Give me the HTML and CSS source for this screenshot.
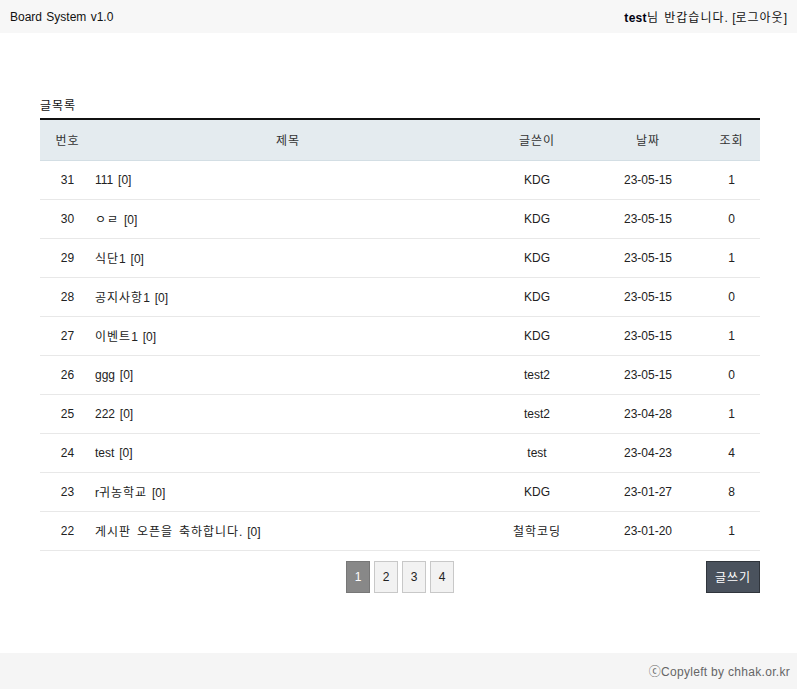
FILE: index.html
```html
<!DOCTYPE html>
<html lang="ko">
<head>
<meta charset="utf-8">
<title>Board System v1.0</title>
<link rel="stylesheet" href="styles.css">
</head>
<body>
<header class="top">
  <div class="brand">Board System v1.0</div>
  <div class="user"><b class="uid">test</b><span class="ko">님 반갑습니다</span>. [<a class="logout ko" href="#">로그아웃</a>]</div>
</header>
<main class="wrap">
  <h2 class="title ko">글목록</h2>
  <table class="board">
    <colgroup>
      <col class="c-no"><col class="c-subj"><col class="c-writer"><col class="c-date"><col class="c-hit">
    </colgroup>
    <thead>
      <tr class="ko"><th>번호</th><th>제목</th><th>글쓴이</th><th>날짜</th><th>조회</th></tr>
    </thead>
    <tbody>
      <tr><td>31</td><td class="subj">111 [0]</td><td>KDG</td><td>23-05-15</td><td>1</td></tr>
      <tr><td>30</td><td class="subj"><span class="ko">ㅇㄹ</span> [0]</td><td>KDG</td><td>23-05-15</td><td>0</td></tr>
      <tr><td>29</td><td class="subj"><span class="ko">식단</span>1 [0]</td><td>KDG</td><td>23-05-15</td><td>1</td></tr>
      <tr><td>28</td><td class="subj"><span class="ko">공지사항</span>1 [0]</td><td>KDG</td><td>23-05-15</td><td>0</td></tr>
      <tr><td>27</td><td class="subj"><span class="ko">이벤트</span>1 [0]</td><td>KDG</td><td>23-05-15</td><td>1</td></tr>
      <tr><td>26</td><td class="subj">ggg [0]</td><td>test2</td><td>23-05-15</td><td>0</td></tr>
      <tr><td>25</td><td class="subj">222 [0]</td><td>test2</td><td>23-04-28</td><td>1</td></tr>
      <tr><td>24</td><td class="subj">test [0]</td><td>test</td><td>23-04-23</td><td>4</td></tr>
      <tr><td>23</td><td class="subj">r<span class="ko">귀농학교</span> [0]</td><td>KDG</td><td>23-01-27</td><td>8</td></tr>
      <tr><td>22</td><td class="subj"><span class="ko">게시판 오픈을 축하합니다</span>. [0]</td><td class="ko">철학코딩</td><td>23-01-20</td><td>1</td></tr>
    </tbody>
  </table>
  <div class="bottom">
    <div class="spacer"></div>
    <nav class="pager">
      <a class="pg on" href="#">1</a>
      <a class="pg" href="#">2</a>
      <a class="pg" href="#">3</a>
      <a class="pg" href="#">4</a>
    </nav>
    <div class="actions"><a class="btn-write ko" href="#">글쓰기</a></div>
  </div>
</main>
<footer class="foot">ⓒCopyleft by chhak.or.kr</footer>
</body>
</html>
```
FILE: styles.css
```css
* { box-sizing: border-box; }
html, body { margin: 0; padding: 0; }
body {
  font-family: "Liberation Sans", "Noto Sans CJK KR", sans-serif;
  font-size: 12px;
  color: #222;
  background: #fff;
}
a { color: inherit; text-decoration: none; }
.ko { letter-spacing: 1px; }

.top {
  height: 33px;
  background: #f7f7f7;
  display: flex;
  justify-content: space-between;
  align-items: center;
  padding: 0 10px;
  color: #111;
  word-spacing: 1px;
}
.uid { color: #001; font-weight: bold; letter-spacing: 0.3px; }

.wrap {
  width: 720px;
  margin: 0 0 0 40px;
  padding-top: 65px;
  padding-bottom: 60px;
}
.title {
  margin: 0 0 4px 0;
  font-size: 12px;
  font-weight: normal;
  line-height: 16px;
  color: #111;
}
.board {
  width: 720px;
  border-collapse: collapse;
  border-top: 2px solid #111;
  table-layout: fixed;
}
.c-no { width: 55px; }
.c-subj { width: 386px; }
.c-writer { width: 112px; }
.c-date { width: 110px; }
.c-hit { width: 57px; }

.board th {
  height: 41px;
  background: #e4ebef;
  border-bottom: 1px solid #d3dee4;
  font-weight: normal;
  color: #333;
  text-align: center;
  padding: 0;
}
.board td {
  height: 39px;
  border-bottom: 1px solid #e8e8e8;
  text-align: center;
  padding: 0;
  color: #222;
}
.board td.subj { text-align: left; word-spacing: 1.5px; }

.bottom {
  display: flex;
  align-items: center;
  margin-top: 10px;
  height: 32px;
}
.spacer { width: 306px; }
.pager {
  display: flex;
  gap: 4px;
  flex: 1;
}
.pg {
  width: 24px;
  height: 32px;
  display: flex;
  align-items: center;
  justify-content: center;
  background: #f2f2f2;
  border: 1px solid #c8c8c8;
  color: #222;
}
.pg.on {
  background: #888;
  border-color: #777;
  color: #fff;
}
.btn-write {
  display: flex;
  align-items: center;
  justify-content: center;
  width: 54px;
  height: 32px;
  background: #4a525d;
  border: 1px solid #30353c;
  color: #fff;
}

.foot {
  height: 36px;
  background: #f5f5f5;
  display: flex;
  align-items: center;
  justify-content: flex-end;
  padding: 0 7px;
  color: #666;
  letter-spacing: 0.3px;
}
```
